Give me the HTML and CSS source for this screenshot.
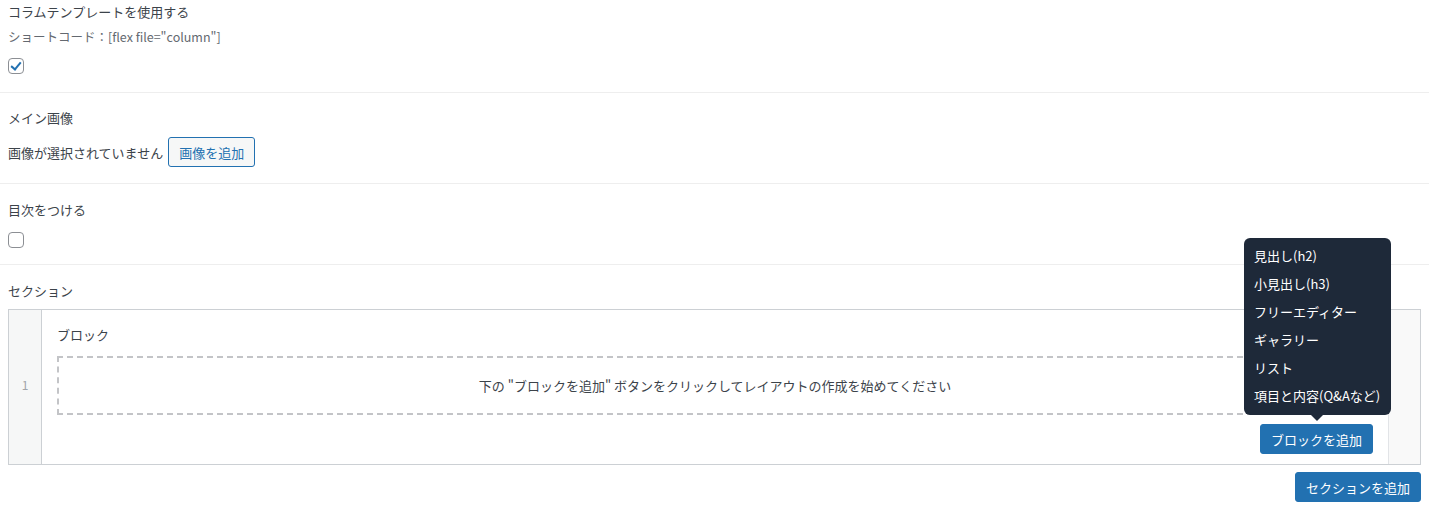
FILE: index.html
```html
<!DOCTYPE html>
<html lang="ja">
<head>
  <meta charset="UTF-8">
  <title>Flex Fields</title>
  <link rel="stylesheet" href="styles.css">
</head>
<body>
  <div class="field">
    <div class="field-label">コラムテンプレートを使用する</div>
    <div class="field-note">ショートコード：[flex file="column"]</div>
    <label class="check checked"><input type="checkbox" checked></label>
  </div>

  <div class="field">
    <div class="field-label">メイン画像</div>
    <div class="image-row">
      <span>画像が選択されていません</span>
      <button class="btn-outline">画像を追加</button>
    </div>
  </div>

  <div class="field">
    <div class="field-label">目次をつける</div>
    <label class="check"><input type="checkbox"></label>
  </div>

  <div class="field last">
    <div class="field-label">セクション</div>
    <div class="section-table">
      <div class="row-num">1</div>
      <div class="row-main">
        <div class="block-label">ブロック</div>
        <div class="block-empty">下の "ブロックを追加" ボタンをクリックしてレイアウトの作成を始めてください</div>
        <div class="block-actions">
          <div class="add-wrap">
            <ul class="popup">
              <li>見出し(h2)</li>
              <li>小見出し(h3)</li>
              <li>フリーエディター</li>
              <li>ギャラリー</li>
              <li>リスト</li>
              <li>項目と内容(Q&amp;Aなど)</li>
            </ul>
            <button class="btn-primary">ブロックを追加</button>
          </div>
        </div>
      </div>
      <div class="row-side"></div>
    </div>
    <div class="section-actions">
      <button class="btn-primary">セクションを追加</button>
    </div>
  </div>
</body>
</html>
```

FILE: styles.css
```css
/* Base */
body {
  margin: 0;
  font-family: "Noto Sans CJK JP", "Noto Sans", sans-serif;
  font-size: 13px;
  color: #3c434a;
  background: #fff;
}

button {
  font-family: inherit;
  font-size: 13px;
  height: 30px;
  padding: 0 10px;
  border-radius: 3px;
  cursor: pointer;
}

/* Fields */
.field {
  padding: 16px 8px 16px;
  border-bottom: 1px solid #eeeeee;
}

.field:first-child {
  padding-top: 2px;
  padding-bottom: 18px;
}

.field:nth-child(2) {
  padding-top: 15px;
}

.field.last {
  border-bottom: none;
  padding-bottom: 0;
}

.field-label {
  line-height: 20px;
}

.field-note {
  margin-top: 5px;
  line-height: 20px;
  color: #646970;
  font-size: 12.5px;
}

.check {
  display: block;
  width: 16px;
  height: 16px;
  margin-top: 12px;
}

.field-note + .check {
  margin-top: 11px;
}

.check input {
  appearance: none;
  -webkit-appearance: none;
  margin: 0;
  width: 16px;
  height: 16px;
  border: 1px solid #8c8f94;
  border-radius: 4px;
  background: #fff;
  box-sizing: border-box;
  display: block;
  position: relative;
}

.check input:checked::after {
  content: "";
  position: absolute;
  left: 4px;
  top: 1px;
  width: 4px;
  height: 8px;
  border: solid #2271b1;
  border-width: 0 2.5px 2.5px 0;
  transform: rotate(40deg);
}

.image-row {
  margin-top: 9px;
  display: flex;
  align-items: center;
  gap: 5px;
  height: 30px;
}

.btn-outline {
  background: #f6f7f7;
  color: #2271b1;
  border: 1px solid #2271b1;
  width: 87px;
  padding: 0;
}

.btn-primary {
  background: #2271b1;
  color: #fff;
  border: 1px solid #2271b1;
}

/* Section table */
.section-table {
  margin-top: 8px;
  display: flex;
  border: 1px solid #ccd0d4;
  height: 154px;
}

.row-num {
  width: 32px;
  background: #f6f7f7;
  border-right: 1px solid #ccd0d4;
  color: #a0a5aa;
  font-size: 12px;
  display: flex;
  align-items: center;
  justify-content: center;
  padding-bottom: 6px;
}

.row-main {
  flex: 1;
  padding: 15px 15px 0 15px;
}

.row-side {
  width: 31px;
  background: #f9f9f9;
  border-left: 1px solid #e2e4e7;
}

.block-label {
  line-height: 20px;
}

.block-empty {
  margin-top: 11px;
  height: 55px;
  border: 2px dashed #c3c4c7;
  display: flex;
  align-items: center;
  justify-content: center;
}

.block-actions {
  margin-top: 9px;
  display: flex;
  justify-content: flex-end;
}

.add-wrap {
  position: relative;
}

.add-wrap .btn-primary {
  width: 113px;
  padding: 0;
}

/* Popup menu over the add button */
.popup {
  position: absolute;
  right: -18px;
  bottom: 39px;
  width: 147px;
  box-sizing: border-box;
  margin: 0;
  padding: 4px 0 5px 10px;
  list-style: none;
  background: #1e2939;
  color: #fff;
  border-radius: 6px;
}

.popup li {
  line-height: 28px;
  white-space: nowrap;
}

.popup::after {
  content: "";
  position: absolute;
  left: 67px;
  bottom: -6px;
  border: 6px solid transparent;
  border-bottom: none;
  border-top-color: #1e2939;
}

.section-actions {
  margin-top: 7px;
  display: flex;
  justify-content: flex-end;
}

.section-actions .btn-primary {
  width: 126px;
  padding: 0;
}
```
